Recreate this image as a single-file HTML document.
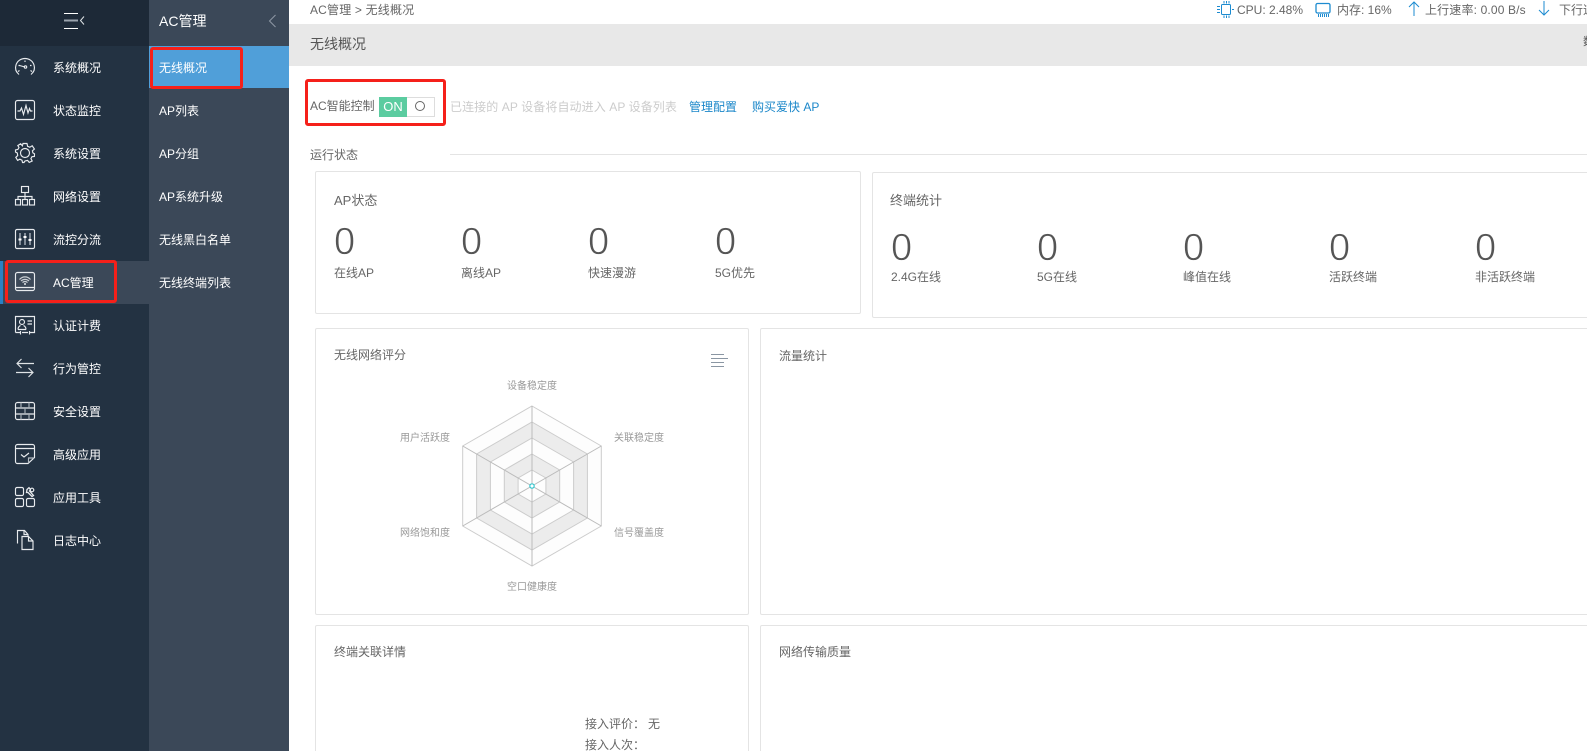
<!DOCTYPE html>
<html><head><meta charset="utf-8">
<style>
*{box-sizing:border-box}
html,body{margin:0;padding:0;width:1587px;height:751px;overflow:hidden;background:#fff}
body{position:relative;font-family:"Liberation Sans","Noto Sans CJK SC",sans-serif;font-size:12px;color:#666}
.a{position:absolute;white-space:nowrap}
.t{position:absolute;white-space:nowrap;line-height:16px;transform:translateY(-8px)}
.m{left:53px;color:#fff}
.s{left:159px;color:#fff}
.card{position:absolute;border:1px solid #e4e4e4;border-radius:2px;background:#fff}
.red{position:absolute;border:3px solid #f5201a;border-radius:3px}
.n{font-size:38px;font-family:"Liberation Sans",sans-serif;color:#555;line-height:40px;transform:translateY(-20px);position:absolute;-webkit-text-stroke:.7px #fff}
svg{position:absolute;overflow:visible}
.ic{left:15px;width:20px;height:20px;fill:none;stroke:#e8ebee;stroke-width:1.15}
</style></head><body>
<div class="a" style="left:0;top:0;width:149px;height:751px;background:#233242"></div>
<div class="a" style="left:0;top:0;width:149px;height:46px;background:#1d2937"></div>
<div class="a" style="left:149px;top:0;width:140px;height:751px;background:#3b4858"></div>
<div class="a" style="left:149px;top:46px;width:140px;height:42px;background:#509fd9"></div>
<div class="a" style="left:0;top:261px;width:149px;height:43px;background:#3b4858"></div>
<div class="a" style="left:0;top:261px;width:3px;height:43px;background:#2a80c4"></div>

<svg style="left:60px;top:10px" width="30" height="22" fill="none">
<path d="M4 3.5H18" stroke="#fff"/><path d="M4 10.5H18" stroke="#9aa3ad" stroke-width="2"/><path d="M4 18.5H18" stroke="#fff"/><path d="M24 6.5L20.5 10.5L24 14.5" stroke="#dfe3e6"/>
</svg>

<svg class="ic" style="top:57px" viewBox="0 0 20 20"><path d="M4 17.5C0.5 14.5 0 11 1 8C2.3 3.8 6 1.5 10 1.5C14 1.5 17.7 3.8 19 8C20 11 19.5 14.5 16 17.5"/><path d="M3.5 8.5H5M15 8.5H16.5M10 3.5V5" /><path d="M4.5 8.5L10 10"/><circle cx="10.5" cy="10" r="1.2"/><path d="M3 14.5L4.5 13.5M17 14.5L15.5 13.5"/></svg>
<svg class="ic" style="top:100px" viewBox="0 0 20 20"><rect x=".5" y=".5" width="19" height="19" rx="2"/><path d="M2.5 11L5 11L6.5 8L8.5 14.5L11 5.5L13 13L14.5 8.5L15.5 11H17.5"/></svg>
<svg class="ic" style="top:143px" viewBox="0 0 20 20"><path d="M8 .5H12L12.6 3.3L14.8 4.2L17.2 2.8L19.4 6L17.4 7.8L17.9 9.9L19.5 10.8L19.4 13.5L17 13.7L15.9 15.6L17.2 18L14.2 19.4L12.6 17.4L10 18L9 19.5H7.5L7 17.3L4.9 16.2L2.6 17.4L.8 14.4L2.7 12.6L2.3 10L.5 9V7L2.9 6.4L4 4.5L2.8 2.6L5.6 .8L7.4 2.8Z"/><circle cx="10" cy="10" r="4.5"/></svg>
<svg class="ic" style="top:186px" viewBox="0 0 20 20"><rect x="6.5" y=".5" width="7" height="6"/><rect x=".5" y="13.5" width="5" height="5.5"/><rect x="7.5" y="13.5" width="5" height="5.5"/><rect x="14.5" y="13.5" width="5" height="5.5"/><path d="M10 6.5V13.5M3 13.5V10.5H17V13.5"/></svg>
<svg class="ic" style="top:229px" viewBox="0 0 20 20"><rect x=".5" y=".5" width="19" height="19" rx="1.5"/><path d="M5 4V16M10 4V16M15 4V16" stroke="#9aa3ad" stroke-width="1.6"/><path d="M3.5 10.5H6.5M8.5 8H11.5M13.5 11H16.5" stroke="#fff" stroke-width="2"/></svg>
<svg class="ic" style="top:272px" viewBox="0 0 20 20"><rect x=".5" y=".5" width="19" height="18" rx="2"/><path d="M.5 15.5H19.5"/><path d="M4.5 7.5C7.5 4 12.5 4 15.5 7.5" stroke="#c9ced3" stroke-width="1.2"/><path d="M6 9C8.3 6.8 11.7 6.8 14 9" stroke="#c9ced3" stroke-width="1.2"/><path d="M7.5 10.5C9 9.3 11 9.3 12.5 10.5" stroke="#c9ced3" stroke-width="1.2"/><circle cx="10" cy="12" r="1" fill="#e3e7ea" stroke="none"/></svg>
<svg class="ic" style="top:316px" viewBox="0 0 20 20"><path d="M.5 16.5V.5H19.5V16.5H15M13 16.5H7M5 16.5H.5M5.5 15V18.5M14.5 15V18.5"/><circle cx="7" cy="6" r="2.5"/><path d="M3 13.5C3 11 4.5 10 5.5 9.5M11 13.5C11 11 9.5 10 8.5 9.5M3 13.5H11"/><path d="M12.5 5H17M12.5 8H17"/></svg>
<svg class="ic" style="top:358px" viewBox="0 0 20 20"><path d="M19 5.5H2M6.5 1L2 5.5L6.5 10" stroke="#dfe3e6"/><path d="M1 14.5H18M13.5 10L18 14.5L13.5 19M8 14.5H10" stroke="#dfe3e6"/></svg>
<svg class="ic" style="top:402px" viewBox="0 0 20 20"><rect x=".5" y=".5" width="19" height="17" rx="2"/><path d="M.5 6H19.5M.5 12H19.5"/><path d="M6 .5V6M14 .5V6M10 6V12M6 12V17.5M14 12V17.5" stroke="#aab2ba"/></svg>
<svg class="ic" style="top:444px" viewBox="0 0 20 20"><path d="M13 19.5H2.5C1.4 19.5 .5 18.6 .5 17.5V2.5C.5 1.4 1.4 .5 2.5 .5H17.5C18.6 .5 19.5 1.4 19.5 2.5V13.5Z"/><path d="M.5 4.5H19.5"/><path d="M13.5 19V14H19" stroke="#b5bcc3"/><path d="M6 10.5L9 13L14 9" /></svg>
<svg class="ic" style="top:487px" viewBox="0 0 20 20"><rect x=".5" y=".5" width="8" height="8" rx="1.5"/><rect x=".5" y="11.5" width="8" height="8" rx="1.5"/><rect x="11.5" y="11.5" width="8" height="8" rx="1.5"/><path d="M12 2.5L14 .7L15.5 2.5L14.5 4L18.5 8.5L17 9.5L13 5.5L11.5 5.5Z" stroke-width="1.3"/><circle cx="17" cy="3" r="1.8"/></svg>
<svg class="ic" style="top:530px" viewBox="0 0 20 20"><path d="M2.5 13.5V.5H9.5L13 4.5V6"/><path d="M9 .5V4.5H13"/><path d="M7 6.5H13.5L18 11V19.5H7Z" fill="#233242"/><path d="M13.5 6.5V11H18"/></svg>

<div class="t m" style="top:68px">系统概况</div>
<div class="t m" style="top:111px">状态监控</div>
<div class="t m" style="top:154px">系统设置</div>
<div class="t m" style="top:197px">网络设置</div>
<div class="t m" style="top:240px">流控分流</div>
<div class="t m" style="top:283px">AC管理</div>
<div class="t m" style="top:326px">认证计费</div>
<div class="t m" style="top:369px">行为管控</div>
<div class="t m" style="top:412px">安全设置</div>
<div class="t m" style="top:455px">高级应用</div>
<div class="t m" style="top:498px">应用工具</div>
<div class="t m" style="top:541px">日志中心</div>

<div class="t s" style="top:21px;font-size:14px">AC管理</div>
<svg style="left:268px;top:14px" width="10" height="14" fill="none"><path d="M7.5 1L1.5 7L7.5 13" stroke="#8f99a5"/></svg>
<div class="t s" style="top:68px">无线概况</div>
<div class="t s" style="top:111px">AP列表</div>
<div class="t s" style="top:154px">AP分组</div>
<div class="t s" style="top:197px">AP系统升级</div>
<div class="t s" style="top:240px">无线黑白名单</div>
<div class="t s" style="top:283px">无线终端列表</div>

<div class="red" style="left:150px;top:47px;width:93px;height:42px"></div>
<div class="red" style="left:5px;top:260px;width:112px;height:43px"></div>

<div class="t" style="left:310px;top:10px;letter-spacing:.18px">AC管理&nbsp;&gt;&nbsp;无线概况</div>
<svg style="left:1216px;top:0" width="20" height="18" fill="none" stroke="#1c8bd0"><rect x="5.5" y="4.5" width="9" height="10" rx="1" stroke-width="1"/><path d="M1 6.5H4M1 9.5H4M1 12.5H4M16 9.5H18M8 1V3.5M10.5 1V3.5M13 1V3.5M8 15.5V18M10.5 15.5V18M13 15.5V18"/></svg>
<div class="t" style="left:1237px;top:10px">CPU: 2.48%</div>
<svg style="left:1315px;top:3px" width="17" height="15" fill="none" stroke="#1c8bd0"><rect x="1" y=".5" width="14" height="9.5" rx="1.5" stroke-width="1.3"/><path d="M3.5 11V14M5.5 11V14M7.5 11V14M9.5 11V14M11.5 11V14M13.5 11V14"/></svg>
<div class="t" style="left:1337px;top:10px">内存: 16%</div>
<svg style="left:1408px;top:1px" width="12" height="15" fill="none" stroke="#1c8bd0"><path d="M6 1V15M1 6L6 1L11 6"/></svg>
<div class="t" style="left:1425px;top:10px;letter-spacing:.15px">上行速率: 0.00 B/s</div>
<svg style="left:1538px;top:1px" width="12" height="15" fill="none" stroke="#1c8bd0"><path d="M6 0V14M1 9L6 14L11 9"/></svg>
<div class="t" style="left:1559px;top:10px">下行速率</div>

<div class="a" style="left:289px;top:24px;width:1298px;height:42px;background:#e8e8e8"></div>
<div class="t" style="left:310px;top:44px;font-size:14px;color:#555">无线概况</div>
<div class="t" style="left:1583px;top:42px;color:#555;font-size:11px">数据</div>

<div class="red" style="left:305px;top:79px;width:141px;height:47px"></div>
<div class="t" style="left:310px;top:106px">AC智能控制</div>
<div class="a" style="left:379px;top:97px;width:56px;height:20px;border:1px solid #ddd"></div>
<div class="a" style="left:379px;top:97px;width:28px;height:20px;background:#5bcca0;color:#fff;font-size:13px;line-height:20px;text-align:center">ON</div>
<div class="a" style="left:415px;top:101px;width:10px;height:10px;border:1px solid #666;border-radius:50%"></div>
<div class="t" style="left:450px;top:107px;color:#ccc;letter-spacing:.09px">已连接的 AP 设备将自动进入 AP 设备列表</div>
<div class="t" style="left:689px;top:107px;color:#1b87c9">管理配置</div>
<div class="t" style="left:752px;top:107px;color:#1b87c9">购买爱快 AP</div>

<div class="t" style="left:310px;top:155px">运行状态</div>
<div class="a" style="left:450px;top:154px;width:1137px;height:1px;background:#e4e4e4"></div>

<div class="card" style="left:315px;top:171px;width:546px;height:143px"></div>
<div class="t" style="left:334px;top:201px;font-size:13px">AP状态</div>
<div class="n" style="left:334px;top:242px">0</div><div class="t" style="left:334px;top:273px">在线AP</div>
<div class="n" style="left:461px;top:242px">0</div><div class="t" style="left:461px;top:273px">离线AP</div>
<div class="n" style="left:588px;top:242px">0</div><div class="t" style="left:588px;top:273px">快速漫游</div>
<div class="n" style="left:715px;top:242px">0</div><div class="t" style="left:715px;top:273px">5G优先</div>

<div class="card" style="left:872px;top:172px;width:730px;height:146px"></div>
<div class="t" style="left:890px;top:201px;font-size:13px">终端统计</div>
<div class="n" style="left:891px;top:248px">0</div><div class="t" style="left:891px;top:277px">2.4G在线</div>
<div class="n" style="left:1037px;top:248px">0</div><div class="t" style="left:1037px;top:277px">5G在线</div>
<div class="n" style="left:1183px;top:248px">0</div><div class="t" style="left:1183px;top:277px">峰值在线</div>
<div class="n" style="left:1329px;top:248px">0</div><div class="t" style="left:1329px;top:277px">活跃终端</div>
<div class="n" style="left:1475px;top:248px">0</div><div class="t" style="left:1475px;top:277px">非活跃终端</div>

<div class="card" style="left:315px;top:328px;width:434px;height:287px"></div>
<div class="t" style="left:334px;top:355px">无线网络评分</div>
<svg style="left:711px;top:353px" width="18" height="14" stroke="#8a96a3"><path d="M0 1.5H13M0 5.5H17M0 9.5H13M0 13.5H13"/></svg>
<svg style="left:440px;top:395px" width="184" height="182" viewBox="-92 -91 184 182">
<path d="M0 -80L69.3 -40V40L0 80L-69.3 40V-40Z" fill="#fdfdfd" stroke="#ccc"/>
<path d="M0 -64L55.4 -32V32L0 64L-55.4 32V-32Z" fill="#ececec" stroke="#ccc"/>
<path d="M0 -48L41.6 -24V24L0 48L-41.6 24V-24Z" fill="#fdfdfd" stroke="#ccc"/>
<path d="M0 -32L27.7 -16V16L0 32L-27.7 16V-16Z" fill="#ececec" stroke="#ccc"/>
<path d="M0 -16L13.9 -8V8L0 16L-13.9 8V-8Z" fill="#fdfdfd" stroke="#ccc"/>
<path d="M0 -80V80M-69.3 -40L69.3 40M-69.3 40L69.3 -40" stroke="#bbb" fill="none"/>
<circle cx="0" cy="0" r="2.2" fill="#fff" stroke="#39c8d0" stroke-width="1.2"/>
</svg>
<div class="t" style="left:507px;top:387px;font-size:10px;color:#999">设备稳定度</div>
<div class="t" style="left:614px;top:439px;font-size:10px;color:#999">关联稳定度</div>
<div class="t" style="left:614px;top:534px;font-size:10px;color:#999">信号覆盖度</div>
<div class="t" style="left:507px;top:588px;font-size:10px;color:#999">空口健康度</div>
<div class="t" style="left:400px;top:534px;font-size:10px;color:#999">网络饱和度</div>
<div class="t" style="left:400px;top:439px;font-size:10px;color:#999">用户活跃度</div>

<div class="card" style="left:760px;top:328px;width:840px;height:287px"></div>
<div class="t" style="left:779px;top:356px">流量统计</div>

<div class="card" style="left:315px;top:625px;width:434px;height:140px"></div>
<div class="t" style="left:334px;top:652px">终端关联详情</div>
<div class="t" style="left:585px;top:724px">接入评价：</div>
<div class="t" style="left:648px;top:724px">无</div>
<div class="t" style="left:585px;top:745px">接入人次：</div>
<div class="card" style="left:760px;top:625px;width:840px;height:140px"></div>
<div class="t" style="left:779px;top:652px">网络传输质量</div>
</body></html>
